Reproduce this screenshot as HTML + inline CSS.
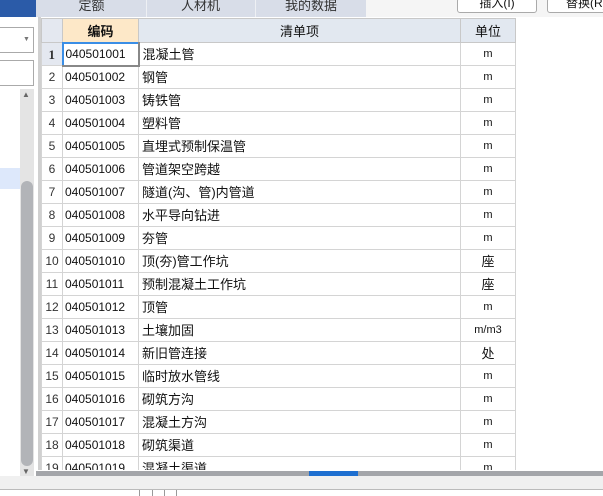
<!DOCTYPE html><html><head><meta charset="utf-8"><style>
*{margin:0;padding:0;box-sizing:border-box}
body{width:603px;height:496px;overflow:hidden;background:#fff;font-family:"Liberation Sans","Noto Sans CJK SC",sans-serif;font-size:12px;color:#111;position:relative}
.a{position:absolute}
table{position:absolute;left:41px;top:18px;border-collapse:collapse;table-layout:fixed}
td{border:1px solid #d4d4d4;height:23px;padding:0 2px;white-space:nowrap;overflow:hidden;line-height:21px}
th{height:24px;background:#e2e8f0;font-weight:normal;border:1px solid #c8c8c8;font-size:13px}
td.n{background:#fff;text-align:center;font-size:12px;color:#333;padding:0}
td.u{text-align:center;font-size:11px}
td.c{font-size:12px}
td.m{font-size:13px;padding-left:3px;line-height:19px}
</style></head><body>
<div class="a" style="left:0;top:0;width:36px;height:17px;background:#2b5ba8"></div>
<div class="a" style="left:36px;top:0;width:330px;height:17px;background:#d8dde8"></div>
<div class="a" style="left:38px;top:0;width:107px;height:17px;text-align:center;font-size:13px;line-height:11px;color:#333">定额</div>
<div class="a" style="left:146px;top:0;width:1px;height:17px;background:#eef0f4"></div>
<div class="a" style="left:147px;top:0;width:107px;height:17px;text-align:center;font-size:13px;line-height:11px;color:#333">人材机</div>
<div class="a" style="left:255px;top:0;width:1px;height:17px;background:#eef0f4"></div>
<div class="a" style="left:256px;top:0;width:110px;height:17px;text-align:center;font-size:13px;line-height:11px;color:#333">我的数据</div>
<div class="a" style="left:366px;top:0;width:237px;height:17px;background:#f5f5f5"></div>
<div class="a" style="left:457px;top:-2px;width:80px;height:15px;border:1px solid #aaa;border-radius:3px;background:#fff;text-align:center;font-size:12px;line-height:8px">插入(I)</div>
<div class="a" style="left:547px;top:-2px;width:70px;height:15px;border:1px solid #aaa;border-radius:3px;background:#fff;font-size:12px;line-height:8px;padding-left:18px">替换(R)</div>
<div class="a" style="left:0;top:17px;width:38px;height:459px;background:#fff"></div>
<div class="a" style="left:38px;top:17px;width:3px;height:459px;background:#d0d0d0"></div>
<div class="a" style="left:-2px;top:27px;width:36px;height:26px;border:1px solid #aaa;background:#fff"></div>
<div class="a" style="left:23px;top:36px;font-size:7px;color:#777">▼</div>
<div class="a" style="left:-2px;top:60px;width:36px;height:26px;border:1px solid #aaa;background:#fff"></div>
<div class="a" style="left:0;top:168px;width:20px;height:21px;background:#dde8fb"></div>
<div class="a" style="left:20px;top:89px;width:14px;height:387px;background:#e4e4e4"></div>
<div class="a" style="left:22px;top:90px;font-size:8px;color:#666">▲</div>
<div class="a" style="left:22px;top:467px;font-size:8px;color:#666">▼</div>
<div class="a" style="left:21px;top:181px;width:12px;height:285px;background:#b2b4b8;border-radius:6px"></div>
<table>
<colgroup><col style="width:21px"><col style="width:76px"><col style="width:322px"><col style="width:55px"></colgroup>
<tr><th style="background:#e4e8f0"></th><th style="background:#fde8c8;font-weight:bold">编码</th><th>清单项</th><th>单位</th></tr>
<tr><td class="n" style="background:#e4e8f0;font-weight:bold;font-family:'Liberation Serif',serif;font-size:13px">1</td><td class="c" style="border:2px solid #888;border-left-color:#3a8ee6;border-top-color:#3a8ee6">040501001</td><td class="m">混凝土管</td><td class="u">m</td></tr>
<tr><td class="n">2</td><td class="c">040501002</td><td class="m">钢管</td><td class="u">m</td></tr>
<tr><td class="n">3</td><td class="c">040501003</td><td class="m">铸铁管</td><td class="u">m</td></tr>
<tr><td class="n">4</td><td class="c">040501004</td><td class="m">塑料管</td><td class="u">m</td></tr>
<tr><td class="n">5</td><td class="c">040501005</td><td class="m">直埋式预制保温管</td><td class="u">m</td></tr>
<tr><td class="n">6</td><td class="c">040501006</td><td class="m">管道架空跨越</td><td class="u">m</td></tr>
<tr><td class="n">7</td><td class="c">040501007</td><td class="m">隧道(沟、管)内管道</td><td class="u">m</td></tr>
<tr><td class="n">8</td><td class="c">040501008</td><td class="m">水平导向钻进</td><td class="u">m</td></tr>
<tr><td class="n">9</td><td class="c">040501009</td><td class="m">夯管</td><td class="u">m</td></tr>
<tr><td class="n">10</td><td class="c">040501010</td><td class="m">顶(夯)管工作坑</td><td class="u" style="font-size:13px">座</td></tr>
<tr><td class="n">11</td><td class="c">040501011</td><td class="m">预制混凝土工作坑</td><td class="u" style="font-size:13px">座</td></tr>
<tr><td class="n">12</td><td class="c">040501012</td><td class="m">顶管</td><td class="u">m</td></tr>
<tr><td class="n">13</td><td class="c">040501013</td><td class="m">土壤加固</td><td class="u">m/m3</td></tr>
<tr><td class="n">14</td><td class="c">040501014</td><td class="m">新旧管连接</td><td class="u" style="font-size:13px">处</td></tr>
<tr><td class="n">15</td><td class="c">040501015</td><td class="m">临时放水管线</td><td class="u">m</td></tr>
<tr><td class="n">16</td><td class="c">040501016</td><td class="m">砌筑方沟</td><td class="u">m</td></tr>
<tr><td class="n">17</td><td class="c">040501017</td><td class="m">混凝土方沟</td><td class="u">m</td></tr>
<tr><td class="n">18</td><td class="c">040501018</td><td class="m">砌筑渠道</td><td class="u">m</td></tr>
<tr><td class="n">19</td><td class="c">040501019</td><td class="m">混凝土渠道</td><td class="u">m</td></tr>
</table>
<div class="a" style="left:36px;top:470px;width:567px;height:26px;background:#fff"></div>
<div class="a" style="left:36px;top:471px;width:567px;height:5px;background:#a4a6aa"></div>
<div class="a" style="left:309px;top:471px;width:49px;height:5px;background:#1e6fd0"></div>
<div class="a" style="left:0;top:476px;width:603px;height:13px;background:#f0f0f0"></div>
<div class="a" style="left:0;top:489px;width:603px;height:1px;background:#bbb"></div>
<div class="a" style="left:139px;top:490px;width:1px;height:6px;background:#999"></div>
<div class="a" style="left:152px;top:490px;width:1px;height:6px;background:#999"></div>
<div class="a" style="left:164px;top:490px;width:1px;height:6px;background:#999"></div>
<div class="a" style="left:176px;top:490px;width:1px;height:6px;background:#999"></div>
</body></html>
